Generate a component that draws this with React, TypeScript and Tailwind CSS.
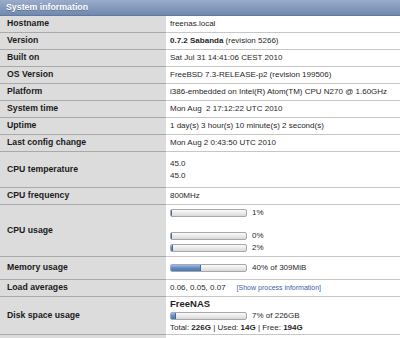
const font = { fontFamily: '"Liberation Sans", Arial, sans-serif' };

function Bar({ pct }: { pct: number }) {
  return (
    <div className="flex items-center h-[11.5px]">
      <div className="relative w-[77px] h-[8px] rounded-[2px] border border-[#a8a8a8] bg-gradient-to-b from-[#fbfbfb] to-[#d9d9d9] overflow-hidden">
        <div
          className="absolute left-0 top-0 bottom-0 bg-gradient-to-b from-[#9dbde3] via-[#5f8cc4] to-[#4a78b2] border-r border-[#3f6aa3]"
          style={{ width: `${Math.max(1, (pct * 75) / 100)}px` }}
        />
      </div>
    </div>
  );
}

function Row({
  label,
  h,
  children,
}: {
  label: string;
  h: string;
  children: React.ReactNode;
}) {
  return (
    <div className={`flex ${h}`}>
      <div className="w-[166px] shrink-0 flex items-center pl-[7px] bg-[#dcdcdc] border-b border-[#a9a9a9] font-bold text-[8.7px] text-[#1a1a1a]">
        {label}
      </div>
      <div className="flex-1 flex flex-col justify-center pl-[4px] bg-white border-b border-[#c6c6c6] text-[8px] text-[#1f1f1f] whitespace-nowrap overflow-hidden">
        {children}
      </div>
    </div>
  );
}

export default function App() {
  return (
    <div className="w-[400px] h-[338px] flex flex-col bg-[#dcdcdc] overflow-hidden" style={font}>
      {/* Header */}
      <div className="h-[16px] shrink-0 flex items-center pl-[6px] bg-gradient-to-b from-[#9aaccb] to-[#7189af] border-b border-[#60799f] text-white font-bold text-[8.8px] [text-shadow:0_1px_0_rgba(0,0,0,0.25)]">
        System information
      </div>

      <Row label="Hostname" h="h-[17px]">
        freenas.local
      </Row>
      <Row label="Version" h="h-[17px]">
        <div>
          <span className="font-bold">0.7.2 Sabanda</span> (revision 5266)
        </div>
      </Row>
      <Row label="Built on" h="h-[17px]">
        Sat Jul 31 14:41:06 CEST 2010
      </Row>
      <Row label="OS Version" h="h-[17px]">
        FreeBSD 7.3-RELEASE-p2 (revision 199506)
      </Row>
      <Row label="Platform" h="h-[17px]">
        i386-embedded on Intel(R) Atom(TM) CPU N270 @ 1.60GHz
      </Row>
      <Row label="System time" h="h-[17px]">
        Mon Aug &nbsp;2 17:12:22 UTC 2010
      </Row>
      <Row label="Uptime" h="h-[17px]">
        1 day(s) 3 hour(s) 10 minute(s) 2 second(s)
      </Row>
      <Row label="Last config change" h="h-[17px]">
        Mon Aug 2 0:43:50 UTC 2010
      </Row>
      <Row label="CPU temperature" h="h-[36px]">
        <div className="leading-[12px]">45.0</div>
        <div className="leading-[12px]">45.0</div>
      </Row>
      <Row label="CPU frequency" h="h-[17px]">
        800MHz
      </Row>
      <Row label="CPU usage" h="h-[52px]">
        <div className="flex items-center gap-[5px]">
          <Bar pct={1} />
          <span>1%</span>
        </div>
        <div className="h-[11.5px]" />
        <div className="flex items-center gap-[5px]">
          <Bar pct={0} />
          <span>0%</span>
        </div>
        <div className="flex items-center gap-[5px]">
          <Bar pct={2} />
          <span>2%</span>
        </div>
      </Row>
      <Row label="Memory usage" h="h-[23px]">
        <div className="flex items-center gap-[5px]">
          <Bar pct={40} />
          <span>40% of 309MiB</span>
        </div>
      </Row>
      <Row label="Load averages" h="h-[17px]">
        <div className="flex items-center">
          <span>0.06, 0.05, 0.07</span>
          <span className="ml-[11px] text-[7px] text-[#3c5fb0]">
            [Show process information]
          </span>
        </div>
      </Row>
      <Row label="Disk space usage" h="h-[38px]">
        <div className="font-bold text-[9.5px] leading-[12px]">FreeNAS</div>
        <div className="flex items-center gap-[5px] leading-[12px]">
          <Bar pct={7} />
          <span>7% of 226GB</span>
        </div>
        <div className="leading-[12px]">
          Total: <span className="font-bold">226G</span> | Used:{" "}
          <span className="font-bold">14G</span> | Free:{" "}
          <span className="font-bold">194G</span>
        </div>
      </Row>
      <div className="flex flex-1">
        <div className="w-[166px] shrink-0 bg-[#dcdcdc]" />
        <div className="flex-1 bg-white" />
      </div>
    </div>
  );
}
